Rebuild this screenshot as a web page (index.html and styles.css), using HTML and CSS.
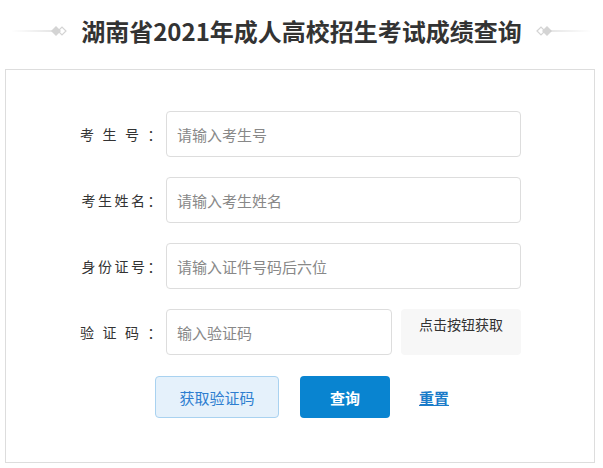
FILE: index.html
```html
<!DOCTYPE html>
<html lang="zh-CN">
<head>
    <meta charset="UTF-8">
    <meta name="viewport" content="width=device-width, initial-scale=1.0">
    <title>湖南省2021年成人高校招生考试成绩查询</title>
    <link rel="stylesheet" href="styles.css">
</head>
<body>
    <div class="header">
        <svg class="deco" width="56" height="12" viewBox="0 0 56 12">
            <defs>
                <linearGradient id="fadeL" x1="0" x2="1" y1="0" y2="0">
                    <stop offset="0" stop-color="#fff"/>
                    <stop offset="1" stop-color="#ccc"/>
                </linearGradient>
            </defs>
            <rect x="0" y="5.5" width="42" height="1" fill="url(#fadeL)"/>
            <path d="M40 6 L45 1 L50 6 L45 11 Z" fill="#d4d4d4"/>
            <path d="M47 6 L51 2 L55 6 L51 10 Z" fill="none" stroke="#d4d4d4" stroke-width="1.2"/>
        </svg>
        <h1>湖南省2021年成人高校招生考试成绩查询</h1>
        <svg class="deco" width="56" height="12" viewBox="0 0 56 12">
            <defs>
                <linearGradient id="fadeR" x1="0" x2="1" y1="0" y2="0">
                    <stop offset="0" stop-color="#ccc"/>
                    <stop offset="1" stop-color="#fff"/>
                </linearGradient>
            </defs>
            <path d="M1 6 L5 2 L9 6 L5 10 Z" fill="none" stroke="#d4d4d4" stroke-width="1.2"/>
            <path d="M6 6 L11 1 L16 6 L11 11 Z" fill="#d4d4d4"/>
            <rect x="14" y="5.5" width="42" height="1" fill="url(#fadeR)"/>
        </svg>
    </div>

    <div class="card">
        <div class="row">
            <label class="label"><span class="spread">考生号</span>：</label>
            <input class="field" type="text" placeholder="请输入考生号">
        </div>
        <div class="row">
            <label class="label">考生姓名：</label>
            <input class="field" type="text" placeholder="请输入考生姓名">
        </div>
        <div class="row">
            <label class="label">身份证号：</label>
            <input class="field" type="text" placeholder="请输入证件号码后六位">
        </div>
        <div class="row">
            <label class="label"><span class="spread">验证码</span>：</label>
            <input class="field short" type="text" placeholder="输入验证码">
            <div class="code">点击按钮获取</div>
        </div>
        <div class="actions">
            <button class="btn btn-code">获取验证码</button>
            <button class="btn btn-query">查询</button>
            <a class="reset" href="#">重置</a>
        </div>
    </div>
</body>
</html>
```

FILE: styles.css
```css
body {
    margin: 0;
    font-family: "Noto Sans CJK SC", "Noto Sans", sans-serif;
    color: #333;
    background: #fff;
}
.header {
    height: 61px;
    display: flex;
    align-items: center;
    justify-content: center;
    gap: 14px;
}
.header h1 {
    margin: 0;
    font-size: 24px;
    font-weight: bold;
    color: #333;
    line-height: 1;
    white-space: nowrap;
}
.deco {
    flex-shrink: 0;
}
.card {
    margin: 8px 0 0 5px;
    width: 588px;
    border: 1px solid #ddd;
    padding: 41px 0 44px;
}
.row {
    display: flex;
    align-items: center;
    margin-bottom: 20px;
}
.label {
    width: 158px;
    margin-right: 2px;
    text-align: right;
    font-size: 14px;
    letter-spacing: 2.5px;
    color: #333;
    white-space: nowrap;
}
.spread {
    letter-spacing: 8.5px;
}
.field {
    box-sizing: border-box;
    width: 355px;
    height: 46px;
    border: 1px solid #ddd;
    border-radius: 4px;
    padding: 0 10px;
    font-family: inherit;
    font-size: 15px;
    color: #333;
    outline: none;
}
.field::placeholder {
    color: #888;
}
.field.short {
    width: 226px;
}
.code {
    box-sizing: border-box;
    width: 120px;
    height: 46px;
    margin-left: 9px;
    background: #f7f7f7;
    border-radius: 4px;
    text-align: center;
    font-size: 14px;
    line-height: 30px;
    color: #333;
}
.actions {
    display: flex;
    align-items: center;
    padding-left: 149px;
    margin-top: 21px;
}
.btn {
    box-sizing: border-box;
    height: 42px;
    border-radius: 4px;
    font-family: inherit;
    font-size: 15px;
    cursor: pointer;
}
.btn-code {
    width: 124px;
    background: #e5f1fb;
    border: 1px solid #a9d2f0;
    color: #2d7ed0;
}
.btn-query {
    width: 90px;
    margin-left: 21px;
    background: #0984d0;
    border: none;
    color: #fff;
    font-weight: bold;
}
.reset {
    margin-left: 29px;
    font-size: 15px;
    font-weight: bold;
    color: #1a7bc9;
}
```
